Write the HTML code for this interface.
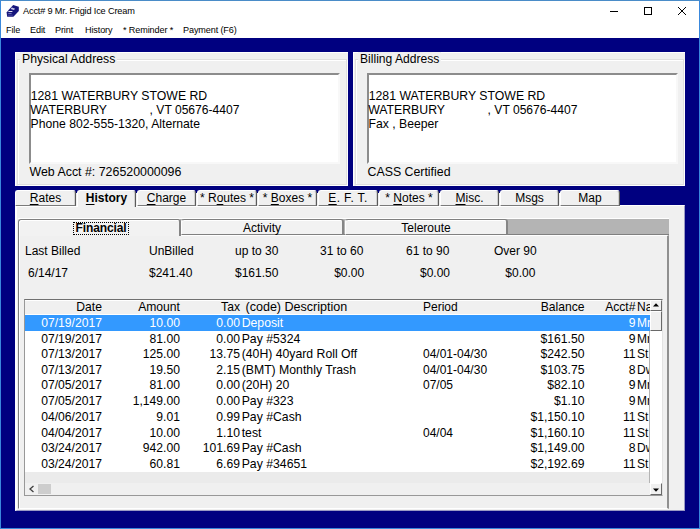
<!DOCTYPE html>
<html><head><meta charset="utf-8">
<style>
*{box-sizing:border-box;margin:0;padding:0}
html,body{width:700px;height:529px;overflow:hidden;background:#000080}
body{position:relative;font-family:"Liberation Sans",sans-serif;font-size:12px;color:#000;line-height:14px}
.abs{position:absolute}
.t{position:absolute;white-space:pre;line-height:14px;height:14px}
.r{text-align:right}
.w{color:#fff}
.g{font-size:12.15px}
.hd{font-size:12.55px}
.d{font-size:12.25px}
.vb{background:#f0f0f0;border-top:1px solid #fff;border-left:1px solid #fff;border-right:1px solid #696969;border-bottom:1px solid #696969}
u{text-decoration:underline;text-underline-offset:2px}
#win{left:0;top:0;width:700px;height:529px;border:1px solid #3a88dc;border-top-color:#4a8cc8}
#title{left:1px;top:1px;width:698px;height:37px;background:#fff}
.grp{background:#f0f0f0;border-left:1px solid #fff;border-top:1px solid #fff}
.frame{border:1px solid #dfdfdf;box-shadow:1px 1px 0 #fff, inset 1px 1px 0 #fff}
.sunk{background:#fff;border-top:2px solid #8c8c8c;border-left:2px solid #8c8c8c;border-right:2px solid #f8f8f8;border-bottom:2px solid #f8f8f8}
.tab{position:absolute;top:190px;height:16px;background:#f0f0f0;border-left:1px solid #fff;border-top:1px solid #fff;border-right:1px solid #5a5a5a;border-bottom:1px solid #7a7a7a;border-radius:3px 3px 0 0;text-align:center;line-height:14.5px;white-space:pre;box-shadow:inset -1px 0 0 #d0d0d0}
.tab.sel{height:17px;font-weight:bold;z-index:3;border-bottom:none}
.itab{position:absolute;top:219px;height:16px;background:#f2f2f2;border-left:1px solid #fff;border-top:1px solid #808080;border-right:2px solid #858585;border-bottom:1px solid #808080;border-radius:3px 3px 0 0;text-align:center;line-height:16px;white-space:pre;box-shadow:inset 0 1px 0 #fff}
</style></head><body>
<div class="abs" id="title"></div>
<div class="abs" id="win"></div>
<!-- title bar -->
<svg class="abs" style="left:0;top:0" width="24" height="22" viewBox="0 0 24 22"><path d="M13.200 5L18.800 6.800L18.800 11L13.400 16.800L7.200 16.800L6.600 12.600L8.600 10Z" fill="#16167c"/><path d="M11.800 7.600L15.200 8.700L13.800 9.900L10.600 8.900Z" fill="#c8c8e8"/><path d="M8.600 10.900L12.600 10.900L12.200 11.900L8.200 11.900Z" fill="#e8e8f4"/><path d="M8.300 13L11.600 13L11.600 13.700L8.300 13.700Z" fill="#9a9ad0"/><path d="M7.800 15.200L12.800 15.200" stroke="#6a6ab4" stroke-width="0.600"/></svg>
<div class="t" style="left:23px;top:4px;font-size:9.2px;letter-spacing:-0.17px">Acct# 9 Mr. Frigid Ice Cream</div>
<svg class="abs" style="left:600px;top:0" width="100" height="22" viewBox="0 0 100 22"><path d="M10 11.5h8" stroke="#000" stroke-width="1"/><rect x="44.5" y="7.500" width="7" height="7" fill="none" stroke="#000"/><path d="M78 7l8 8M86 7l-8 8" stroke="#000" stroke-width="1"/></svg>
<!-- menu -->
<div class="t" style="left:6px;top:22.5px;font-size:9.1px;letter-spacing:-0.12px">File</div>
<div class="t" style="left:30px;top:22.5px;font-size:9.1px;letter-spacing:-0.12px">Edit</div>
<div class="t" style="left:55px;top:22.5px;font-size:9.1px;letter-spacing:-0.12px">Print</div>
<div class="t" style="left:85px;top:22.5px;font-size:9.1px;letter-spacing:-0.12px">History</div>
<div class="t" style="left:123px;top:22.5px;font-size:9.1px;letter-spacing:-0.12px">* Reminder *</div>
<div class="t" style="left:183px;top:22.5px;font-size:9.1px;letter-spacing:-0.12px">Payment (F6)</div>

<!-- left group -->
<div class="abs grp" style="left:15px;top:52px;width:333px;height:134px"></div>
<div class="abs frame" style="left:17px;top:59px;width:330px;height:126px"></div>
<div class="t" style="left:20px;top:52px;background:#f0f0f0;padding:0 2px;font-size:12.25px">Physical Address</div>
<div class="abs sunk" style="left:29px;top:73px;width:311px;height:91px"></div>
<div class="t" style="left:30.7px;top:89px;font-size:12.28px">1281 WATERBURY STOWE RD</div>
<div class="t" style="left:30.2px;top:103px;font-size:12.28px">WATERBURY</div><div class="t" style="left:149.6px;top:103px;font-size:12.1px">, VT 05676-4407</div>
<div class="t" style="left:30.6px;top:117px;font-size:12.2px">Phone 802-555-1320, Alternate</div>
<div class="t" style="left:29.5px;top:165.4px;font-size:12.38px">Web Acct #: 726520000096</div>

<!-- right group -->
<div class="abs grp" style="left:353px;top:52px;width:332px;height:134px"></div>
<div class="abs frame" style="left:355px;top:59px;width:329px;height:126px"></div>
<div class="t" style="left:358px;top:52px;background:#f0f0f0;padding:0 2px;font-size:12.1px">Billing Address</div>
<div class="abs sunk" style="left:367px;top:73px;width:311px;height:91px"></div>
<div class="t" style="left:368.7px;top:89px;font-size:12.28px">1281 WATERBURY STOWE RD</div>
<div class="t" style="left:368.2px;top:103px;font-size:12.28px">WATERBURY</div><div class="t" style="left:487.6px;top:103px;font-size:12.1px">, VT 05676-4407</div>
<div class="t" style="left:368.6px;top:117px;font-size:12.2px">Fax , Beeper</div>
<div class="t" style="left:367.5px;top:165.4px;font-size:12.35px">CASS Certified</div>

<!-- outer tab panel -->
<div class="abs" style="left:15px;top:205px;width:670px;height:306px;background:#f0f0f0;border-left:2px solid #fff;border-top:1px solid #fff;border-right:1px solid #9a9ac4;border-bottom:1px solid #9a9ac4"></div>
<div class="abs" style="left:15px;top:193px;width:605px;height:13px;background:#f0f0f0"></div>
<div class="abs" style="left:15px;top:206px;width:605px;height:1px;background:#fff"></div>
<div class="tab" style="left:15px;width:61px"><u>R</u>ates</div>
<div class="tab sel" style="left:77px;width:59px"><u>H</u>istory</div>
<div class="tab" style="left:137px;width:59px"><u>C</u>harge</div>
<div class="tab" style="left:197px;width:60px">* R<u>o</u>utes *</div>
<div class="tab" style="left:258px;width:59px">* <u>B</u>oxes *</div>
<div class="tab" style="left:318px;width:60px"><span style="letter-spacing:0.35px"><u>E</u>. F. T.</span></div>
<div class="tab" style="left:379px;width:60px">* <u>N</u>otes *</div>
<div class="tab" style="left:440px;width:59px"><u>M</u>isc.</div>
<div class="tab" style="left:500px;width:59px">Msgs</div>
<div class="tab" style="left:560px;width:60px">Map</div>

<!-- inner tab panel -->
<div class="abs" style="left:18px;top:218px;width:651px;height:1px;background:#fff"></div>
<div class="abs" style="left:180px;top:219px;width:489px;height:16px;background:#b4b4b4;border-bottom:1px solid #808080"></div>
<div class="abs" style="left:18px;top:235px;width:651px;height:274px;background:#f0f0f0;border-left:1px solid #808080;border-top:1px solid #fff;border-right:2px solid #909090;border-bottom:1px solid #fff;box-shadow:inset 1px 0 0 #fff"></div>
<div class="itab" style="left:181px;width:163px">Activity</div>
<div class="itab" style="left:345px;width:163px">Teleroute</div>
<div class="itab" style="left:18px;width:163px;height:17px;font-weight:bold;z-index:3;border-bottom:none;border-left:1px solid #808080;box-shadow:inset 1px 1px 0 #fff"><span style="display:inline-block;height:11px;line-height:10px;outline:1px dotted #000;padding:0 1px;position:relative;left:2px;top:0px;letter-spacing:-0.1px">Financial</span></div>

<div class="t" style="left:25px;top:243.7px">Last Billed</div>
<div class="t" style="left:149px;top:243.7px">UnBilled</div>
<div class="t" style="left:235px;top:243.7px">up to 30</div>
<div class="t" style="left:320px;top:243.7px">31 to 60</div>
<div class="t" style="left:406px;top:243.7px">61 to 90</div>
<div class="t" style="left:494px;top:243.7px">Over 90</div>
<div class="t" style="left:28px;top:265.7px">6/14/17</div>
<div class="t r" style="left:99.4px;width:93px;top:265.7px">$241.40</div>
<div class="t r" style="left:185.4px;width:93px;top:265.7px">$161.50</div>
<div class="t r" style="left:271.2px;width:93px;top:265.7px">$0.00</div>
<div class="t r" style="left:357px;width:93px;top:265.7px">$0.00</div>
<div class="t r" style="left:442.4px;width:93px;top:265.7px">$0.00</div>

<!-- grid -->
<div class="abs" id="grid" style="left:24px;top:299px;width:639px;height:197px;background:#fff;border-top:1px solid #707070;border-left:1px solid #989898;border-right:1px solid #e3e3e3;border-bottom:1px solid #989898"></div>
<div class="abs" id="gbody" style="left:25px;top:300px;width:625px;height:172px;overflow:hidden;background:#fff">
<div class="abs" style="left:0;top:0;width:625px;height:15px;background:#f0f0f0;border-top:1px solid #fff;border-bottom:1px solid #fff"></div>
<div class="t r g" style="left:-23px;width:100px;top:-0.2px">Date</div>
<div class="t r g" style="left:55px;width:100px;top:-0.2px">Amount</div>
<div class="t r g" style="left:115px;width:100px;top:-0.2px">Tax</div>
<div class="t hd" style="left:217px;top:-0.2px"> (code) Description</div>
<div class="t" style="left:398px;top:-0.2px">Period</div>
<div class="t r g" style="left:459.5px;width:100px;top:-0.2px">Balance</div>
<div class="t r g" style="left:510.5px;width:100px;top:-0.2px">Acct#</div>
<div class="t" style="left:612px;top:-0.2px">Name</div>
<div class="abs" style="left:0;top:15px;width:625px;height:16px;background:#3399ff"></div>
<div class="t r g w" style="left:-23px;width:100px;top:16.0px">07/19/2017</div>
<div class="t r g w" style="left:55px;width:100px;top:16.0px">10.00</div>
<div class="t r g w" style="left:115px;width:100px;top:16.0px">0.00</div>
<div class="t w d" style="left:216.7px;top:16.0px">Deposit</div>
<div class="t r g w" style="left:510.5px;width:100px;top:16.0px">9</div>
<div class="t w" style="left:612px;top:16.0px">Mr. Frigid</div>
<div class="t r g" style="left:-23px;width:100px;top:32.0px">07/19/2017</div>
<div class="t r g" style="left:55px;width:100px;top:32.0px">81.00</div>
<div class="t r g" style="left:115px;width:100px;top:32.0px">0.00</div>
<div class="t d" style="left:216.7px;top:32.0px">Pay #5324</div>
<div class="t r g" style="left:459.5px;width:100px;top:32.0px">$161.50</div>
<div class="t r g" style="left:510.5px;width:100px;top:32.0px">9</div>
<div class="t" style="left:612px;top:32.0px">Mr. Frigid</div>
<div class="t r g" style="left:-23px;width:100px;top:47.0px">07/13/2017</div>
<div class="t r g" style="left:55px;width:100px;top:47.0px">125.00</div>
<div class="t r g" style="left:115px;width:100px;top:47.0px">13.75</div>
<div class="t d" style="left:216.7px;top:47.0px">(40H) 40yard Roll Off</div>
<div class="t" style="left:398px;top:47.0px">04/01-04/30</div>
<div class="t r g" style="left:459.5px;width:100px;top:47.0px">$242.50</div>
<div class="t r g" style="left:510.5px;width:100px;top:47.0px">11</div>
<div class="t" style="left:612px;top:47.0px">St</div>
<div class="t r g" style="left:-23px;width:100px;top:63.0px">07/13/2017</div>
<div class="t r g" style="left:55px;width:100px;top:63.0px">19.50</div>
<div class="t r g" style="left:115px;width:100px;top:63.0px">2.15</div>
<div class="t d" style="left:216.7px;top:63.0px">(BMT) Monthly Trash</div>
<div class="t" style="left:398px;top:63.0px">04/01-04/30</div>
<div class="t r g" style="left:459.5px;width:100px;top:63.0px">$103.75</div>
<div class="t r g" style="left:510.5px;width:100px;top:63.0px">8</div>
<div class="t" style="left:612px;top:63.0px">Dw</div>
<div class="t r g" style="left:-23px;width:100px;top:78.0px">07/05/2017</div>
<div class="t r g" style="left:55px;width:100px;top:78.0px">81.00</div>
<div class="t r g" style="left:115px;width:100px;top:78.0px">0.00</div>
<div class="t d" style="left:216.7px;top:78.0px">(20H) 20</div>
<div class="t" style="left:398px;top:78.0px">07/05</div>
<div class="t r g" style="left:459.5px;width:100px;top:78.0px">$82.10</div>
<div class="t r g" style="left:510.5px;width:100px;top:78.0px">9</div>
<div class="t" style="left:612px;top:78.0px">Mr. Frigid</div>
<div class="t r g" style="left:-23px;width:100px;top:94.0px">07/05/2017</div>
<div class="t r g" style="left:55px;width:100px;top:94.0px">1,149.00</div>
<div class="t r g" style="left:115px;width:100px;top:94.0px">0.00</div>
<div class="t d" style="left:216.7px;top:94.0px">Pay #323</div>
<div class="t r g" style="left:459.5px;width:100px;top:94.0px">$1.10</div>
<div class="t r g" style="left:510.5px;width:100px;top:94.0px">9</div>
<div class="t" style="left:612px;top:94.0px">Mr. Frigid</div>
<div class="t r g" style="left:-23px;width:100px;top:110.0px">04/06/2017</div>
<div class="t r g" style="left:55px;width:100px;top:110.0px">9.01</div>
<div class="t r g" style="left:115px;width:100px;top:110.0px">0.99</div>
<div class="t d" style="left:216.7px;top:110.0px">Pay #Cash</div>
<div class="t r g" style="left:459.5px;width:100px;top:110.0px">$1,150.10</div>
<div class="t r g" style="left:510.5px;width:100px;top:110.0px">11</div>
<div class="t" style="left:612px;top:110.0px">St</div>
<div class="t r g" style="left:-23px;width:100px;top:126.0px">04/04/2017</div>
<div class="t r g" style="left:55px;width:100px;top:126.0px">10.00</div>
<div class="t r g" style="left:115px;width:100px;top:126.0px">1.10</div>
<div class="t d" style="left:216.7px;top:126.0px">test</div>
<div class="t" style="left:398px;top:126.0px">04/04</div>
<div class="t r g" style="left:459.5px;width:100px;top:126.0px">$1,160.10</div>
<div class="t r g" style="left:510.5px;width:100px;top:126.0px">11</div>
<div class="t" style="left:612px;top:126.0px">St</div>
<div class="t r g" style="left:-23px;width:100px;top:141.0px">03/24/2017</div>
<div class="t r g" style="left:55px;width:100px;top:141.0px">942.00</div>
<div class="t r g" style="left:115px;width:100px;top:141.0px">101.69</div>
<div class="t d" style="left:216.7px;top:141.0px">Pay #Cash</div>
<div class="t r g" style="left:459.5px;width:100px;top:141.0px">$1,149.00</div>
<div class="t r g" style="left:510.5px;width:100px;top:141.0px">8</div>
<div class="t" style="left:612px;top:141.0px">Dw</div>
<div class="t r g" style="left:-23px;width:100px;top:157.0px">03/24/2017</div>
<div class="t r g" style="left:55px;width:100px;top:157.0px">60.81</div>
<div class="t r g" style="left:115px;width:100px;top:157.0px">6.69</div>
<div class="t d" style="left:216.7px;top:157.0px">Pay #34651</div>
<div class="t r g" style="left:459.5px;width:100px;top:157.0px">$2,192.69</div>
<div class="t r g" style="left:510.5px;width:100px;top:157.0px">11</div>
<div class="t" style="left:612px;top:157.0px">St</div>
</div>
<div class="abs" style="left:25px;top:472px;width:625px;height:11px;background:#ebebeb"></div>
<div class="abs" style="left:25px;top:483px;width:625px;height:12px;background:#f0f0f0"></div>
<div class="abs" style="left:38px;top:484px;width:13px;height:10px;background:#cdcdcd"></div>
<svg class="abs" style="left:28px;top:485px" width="8" height="8" viewBox="0 0 8 8"><path d="M5.500 1L2 4l3.500 3" fill="none" stroke="#404040" stroke-width="1.300"/></svg>
<!-- vscroll -->
<div class="abs" style="left:650px;top:300px;width:12px;height:195px;background:#fff"></div>
<div class="abs vb" style="left:650px;top:300px;width:12px;height:11px"></div>
<div class="abs vb" style="left:650px;top:311px;width:12px;height:20px"></div>
<div class="abs vb" style="left:650px;top:483px;width:12px;height:12px"></div>
<svg class="abs" style="left:653px;top:303px" width="6" height="4" viewBox="0 0 6 4"><path d="M0 3.500L3 0.200L6 3.500z" fill="#000"/></svg>
<svg class="abs" style="left:653px;top:488px" width="6" height="4" viewBox="0 0 6 4"><path d="M0 0.500L3 3.800L6 0.500z" fill="#000"/></svg>
<div class="abs" style="left:649px;top:331px;width:1px;height:152px;background:#b4b4b4"></div>
</body></html>
